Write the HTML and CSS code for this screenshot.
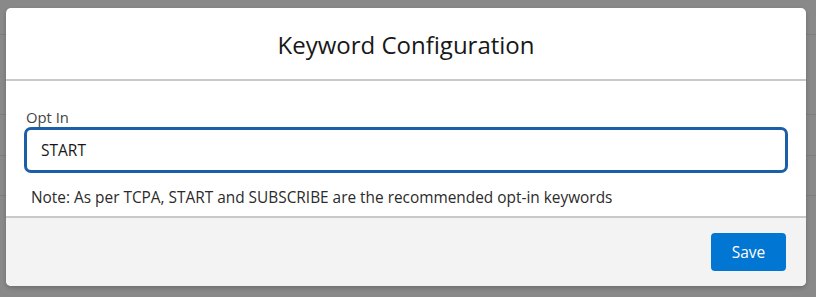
FILE: index.html
```
<!DOCTYPE html>
<html lang="en">
<head>
  <meta charset="UTF-8" />
  <title>Keyword Configuration</title>
  <link rel="stylesheet" href="styles.css">
</head>
<body>
  <div class="backdrop">
    <div class="row-line" style="top: 34px"></div>
    <div class="row-line" style="top: 114px"></div>
    <div class="row-line" style="top: 155px"></div>
    <div class="row-line" style="top: 195px"></div>

    <section class="modal">
      <header class="modal-header">
        <h2>Keyword Configuration</h2>
      </header>

      <div class="modal-body">
        <label class="field-label" for="optin">Opt In</label>
        <input id="optin" class="field-input" type="text" value="START" />
        <p class="note">Note: As per TCPA, START and SUBSCRIBE are the recommended opt-in keywords</p>
      </div>

      <footer class="modal-footer">
        <button class="btn-save">Save</button>
      </footer>
    </section>
  </div>
</body>
</html>
```

FILE: styles.css
```
* {
  box-sizing: border-box;
  margin: 0;
  padding: 0;
}

body {
  font-family: 'Open Sans', 'Noto Sans', sans-serif;
  background: #898989;
  color: #181818;
}

.backdrop {
  position: relative;
  width: 816px;
  height: 297px;
  padding: 8px 10px 0 6px;
}

.row-line {
  position: absolute;
  left: 0;
  right: 0;
  height: 1px;
  background: #7d7d7d;
}

.modal {
  position: relative;
  width: 800px;
  height: 278px;
  background: #fff;
  border-radius: 5px;
  box-shadow: 0 2px 4px rgba(0,0,0,0.2);
  display: flex;
  flex-direction: column;
  overflow: hidden;
}

.modal-header {
  height: 73px;
  border-bottom: 2px solid #c9c9c9;
  display: flex;
  align-items: center;
  justify-content: center;
}

.modal-header h2 {
  font-weight: 400;
  font-size: 24px;
  color: #181818;
  padding-top: 2px;
}

.modal-body {
  flex: 1;
  padding: 26px 18px 0 18px;
}

.field-label {
  display: block;
  font-size: 14.8px;
  color: #444;
  line-height: 20px;
  margin-left: 2px;
}

.field-input {
  display: block;
  width: 764px;
  height: 46px;
  border: 3px solid #1b5fa8;
  border-radius: 7px;
  padding: 0 14px;
  font-family: inherit;
  font-size: 15.5px;
  color: #181818;
  outline: none;
}

.note {
  font-size: 15.4px;
  color: #2b2b2b;
  margin: 14px 0 0 7px;
  line-height: 21px;
}

.modal-footer {
  height: 70px;
  background: #f3f3f3;
  border-top: 2px solid #c9c9c9;
  display: flex;
  align-items: center;
  justify-content: flex-end;
  padding: 0 20px 0 0;
}

.btn-save {
  width: 75px;
  height: 38px;
  background: #0176d3;
  color: #fff;
  border: none;
  border-radius: 4px;
  font-family: inherit;
  font-size: 15.5px;
  margin-top: -1px;
}
```
